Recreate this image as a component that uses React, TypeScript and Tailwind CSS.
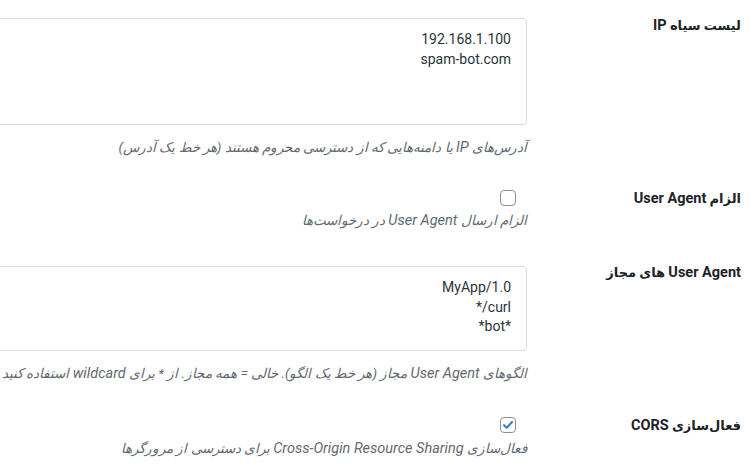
import React from "react";

function Check({ checked }: { checked?: boolean }) {
  return (
    <div className="flex h-4 w-4 items-center justify-center rounded-[4px] border border-[#8c8f94] bg-white">
      {checked && (
        <svg viewBox="0 0 16 16" className="h-[14px] w-[14px]">
          <path d="M3.5 8.2l3 3L12.6 4.6" fill="none" stroke="#3582c4" strokeWidth="2.4" strokeLinecap="round" strokeLinejoin="round" />
        </svg>
      )}
    </div>
  );
}

// latin runs render a touch larger than the persian ones
const L = ({ children }: { children: React.ReactNode }) => <span className="text-[14.5px]">{children}</span>;

function Label({ children, top }: { children: React.ReactNode; top: string }) {
  return (
    <div className={`w-[226px] shrink-0 pr-[12px] ${top}`}>
      <p className="h-[20px] text-[13px] font-bold leading-[20px] text-[#1d2327]">{children}</p>
    </div>
  );
}

function Desc({ children, mt }: { children: React.ReactNode; mt: string }) {
  return <p className={`h-[20px] whitespace-nowrap text-[13.5px] italic leading-[20px] text-[#646970] ${mt}`}>{children}</p>;
}

export default function App() {
  const box =
    "block w-[600px] resize-none rounded-[4px] border border-[#dcdcde] bg-white pr-[15px] pt-[11px] text-right text-[14px] leading-[19.5px] text-[#2c3338] outline-none";

  return (
    <div dir="rtl" className="h-[466px] w-[753px] overflow-hidden bg-white font-['Roboto','DejaVu_Sans',sans-serif]">
      {/* IP blacklist */}
      <div className="flex pb-[15px]">
        <Label top="pt-[16px]">لیست سیاه <L>IP</L></Label>
        <div className="min-w-0 flex-1 pt-[18px]">
          <textarea dir="ltr" readOnly className={`${box} h-[107px]`} defaultValue={"192.168.1.100\nspam-bot.com"} />
          <Desc mt="mt-[12px]">آدرس‌های <L>IP</L> یا دامنه‌هایی که از دسترسی محروم هستند (هر خط یک آدرس)</Desc>
        </div>
      </div>

      {/* Require UA */}
      <div className="flex pb-[15px]">
        <Label top="pt-[17px]">الزام <L>User Agent</L></Label>
        <div className="min-w-0 flex-1 pt-[18px]">
          <div className="mr-[11px]">
            <Check />
          </div>
          <Desc mt="mt-[4px]">الزام ارسال <L>User Agent</L> در درخواست‌ها</Desc>
        </div>
      </div>

      {/* Allowed UAs */}
      <div className="flex pb-[15px]">
        <Label top="pt-[18px]"><L>User Agent</L> های مجاز</Label>
        <div className="min-w-0 flex-1 pt-[21px]">
          <textarea dir="ltr" readOnly className={`${box} h-[85px]`} defaultValue={"MyApp/1.0\n*/curl\n*bot*"} />
          <Desc mt="mt-[12px]">الگوهای <L>User Agent</L> مجاز (هر خط یک الگو). خالی = همه مجاز. از * برای <L>wildcard</L> استفاده کنید</Desc>
        </div>
      </div>

      {/* CORS */}
      <div className="flex pb-[15px]">
        <Label top="pt-[18px]">فعال‌سازی <L>CORS</L></Label>
        <div className="min-w-0 flex-1 pt-[19px]">
          <div className="mr-[11px]">
            <Check checked />
          </div>
          <Desc mt="mt-[5px]">فعال‌سازی <L>Cross-Origin Resource Sharing</L> برای دسترسی از مرورگرها</Desc>
        </div>
      </div>
    </div>
  );
}
